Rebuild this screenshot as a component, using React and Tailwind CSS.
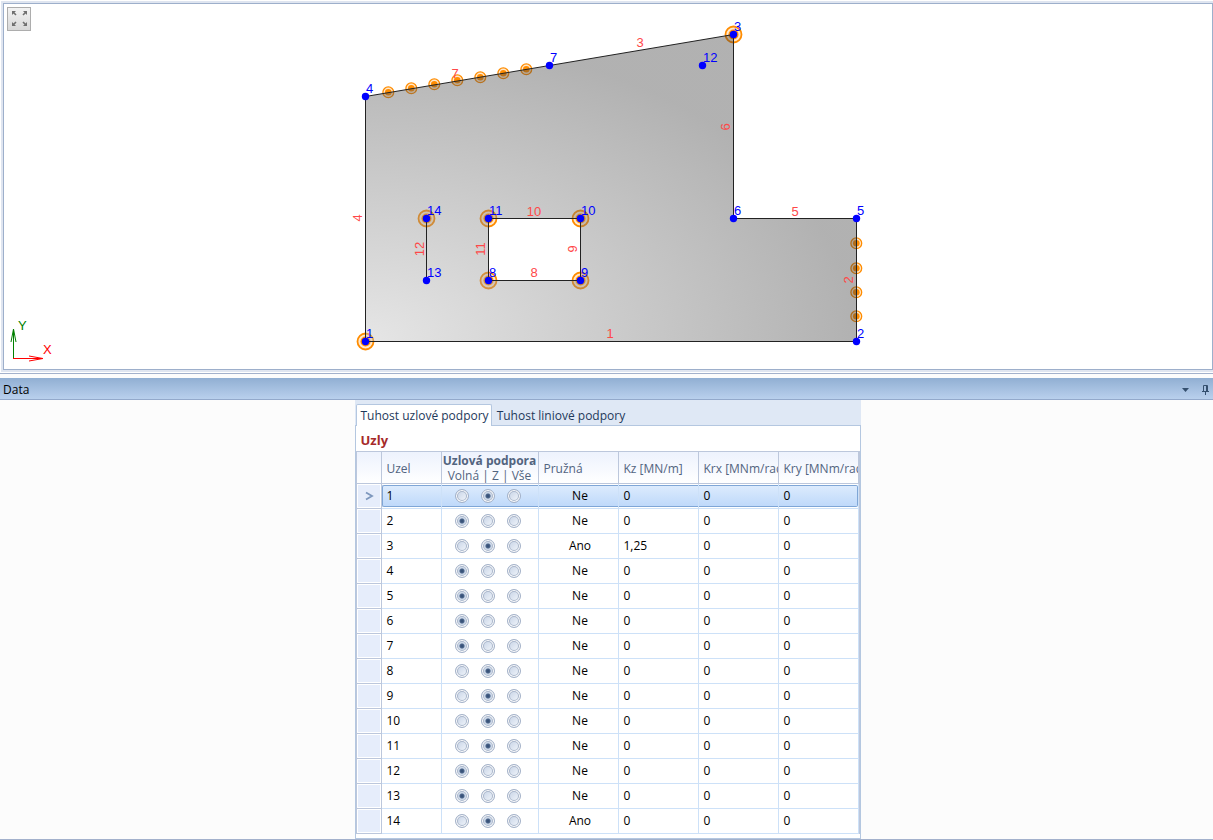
import React, { useState } from 'react';

const nodes = [
  { id: 1, x: 365, y: 341, support: true },
  { id: 2, x: 856, y: 341 },
  { id: 3, x: 733, y: 34, support: true },
  { id: 4, x: 365, y: 96 },
  { id: 5, x: 856, y: 218 },
  { id: 6, x: 733, y: 218 },
  { id: 7, x: 549, y: 65 },
  { id: 8, x: 488, y: 280, support: true },
  { id: 9, x: 580, y: 280, support: true },
  { id: 10, x: 580, y: 218, support: true },
  { id: 11, x: 488, y: 218, support: true },
  { id: 12, x: 702, y: 65 },
  { id: 13, x: 426, y: 280 },
  { id: 14, x: 426, y: 218, support: true }
];

const lineLabels = [
  { text: '1', x: 610, y: 338 },
  { text: '2', x: 853, y: 280, vertical: true },
  { text: '3', x: 640, y: 47 },
  { text: '4', x: 362, y: 218, vertical: true },
  { text: '5', x: 795, y: 216 },
  { text: '6', x: 730, y: 127, vertical: true },
  { text: '7', x: 455, y: 78 },
  { text: '8', x: 534, y: 277 },
  { text: '9', x: 577, y: 249, vertical: true },
  { text: '10', x: 534, y: 216 },
  { text: '11', x: 485, y: 249, vertical: true },
  { text: '12', x: 424, y: 249, vertical: true }
];

const lineSupports = [
  [388, 92], [411, 88], [434, 84], [457, 80], [480, 77], [503, 73], [526, 69],
  [856, 243], [856, 268], [856, 292], [856, 316]
];

const initialRows = [
  { id: 1, support: 'Z', spring: 'Ne', kz: '0' },
  { id: 2, support: 'Volná', spring: 'Ne', kz: '0' },
  { id: 3, support: 'Z', spring: 'Ano', kz: '1,25' },
  { id: 4, support: 'Volná', spring: 'Ne', kz: '0' },
  { id: 5, support: 'Volná', spring: 'Ne', kz: '0' },
  { id: 6, support: 'Volná', spring: 'Ne', kz: '0' },
  { id: 7, support: 'Volná', spring: 'Ne', kz: '0' },
  { id: 8, support: 'Z', spring: 'Ne', kz: '0' },
  { id: 9, support: 'Z', spring: 'Ne', kz: '0' },
  { id: 10, support: 'Z', spring: 'Ne', kz: '0' },
  { id: 11, support: 'Z', spring: 'Ne', kz: '0' },
  { id: 12, support: 'Volná', spring: 'Ne', kz: '0' },
  { id: 13, support: 'Volná', spring: 'Ne', kz: '0' },
  { id: 14, support: 'Z', spring: 'Ano', kz: '0' }
];

const supportTypes = ['Volná', 'Z', 'Vše'];

const PlateDrawing = () => (
  <svg
    viewBox="4 4 1208 365"
    className="block w-full h-[365px] font-['Liberation_Sans',Arial,sans-serif] text-[13px]"
  >
    <defs>
      <radialGradient
        id="plate"
        gradientUnits="userSpaceOnUse"
        cx="0"
        cy="0"
        r="1"
        gradientTransform="translate(365 341) scale(491 307)"
      >
        <stop offset="0" stopColor="#c0c0c0" stopOpacity="0.4" />
        <stop offset="1" stopColor="#3d3d3d" stopOpacity="0.4" />
      </radialGradient>
    </defs>

    {/* Supports lie under the transparent plate */}
    {nodes.filter(n => n.support).map(n => (
      <g key={n.id} transform={`translate(${n.x + 0.5} ${n.y + 0.5})`}>
        <circle r="8" fill="#ffe8cc" stroke="#ff8c00" strokeWidth="1.8" />
        <circle r="5" fill="#ff8c00" />
      </g>
    ))}
    {lineSupports.map(([x, y]) => (
      <g key={`${x}-${y}`} transform={`translate(${x + 0.3} ${y + 0.3})`}>
        <circle r="5.4" fill="#ffe8cc" stroke="#ff8c00" strokeWidth="1.3" />
        <circle r="3.3" fill="#ff8c00" />
      </g>
    ))}

    <path
      d="M365.5 341.5H856.5V218.5H733.5V34.5L365.5 96.5ZM488.5 218.5H580.5V280.5H488.5Z"
      fill="url(#plate)"
      fillRule="evenodd"
      stroke="#222"
    />
    <path d="M426.5 218.5V280.5" stroke="#222" />

    {lineLabels.map(l => (
      <text
        key={l.text}
        fill="#ff4848"
        textAnchor="middle"
        transform={l.vertical ? `translate(${l.x} ${l.y}) rotate(-90)` : `translate(${l.x} ${l.y})`}
      >
        {l.text}
      </text>
    ))}
    {nodes.map(n => (
      <g key={n.id} fill="#0000ff">
        <circle cx={n.x + 0.5} cy={n.y + 0.5} r="3.7" />
        <text x={n.x + 1} y={n.y - 3}>{n.id}</text>
      </g>
    ))}
  </svg>
);

const AxisCross = () => (
  <svg
    width="50"
    height="48"
    fill="none"
    className="absolute left-1 bottom-1 font-['Liberation_Sans',Arial,sans-serif] text-[13px]"
  >
    <path d="M5.5 42V12M3 25L5.5 12L8 25" stroke="#008000" />
    <path d="M5 41.5H35M21 39L35 41.5L21 44" stroke="#ff0000" />
    <text x="10" y="13" fill="#008000">Y</text>
    <text x="35" y="37" fill="#ff0000">X</text>
  </svg>
);

const HeaderCell = ({ children }) => (
  <th className="h-8 p-0 pt-0.5 font-normal text-left border-r border-b border-[#bcc7dc] bg-linear-to-b from-[#edf2fd] to-white">
    <div className="ml-[5px] overflow-hidden whitespace-nowrap">{children}</div>
  </th>
);

const Cell = ({ selected, edge, children }) => (
  <td className="h-[25px] p-0 border-r border-b border-[#cde1f8]">
    <div
      className={`${
        selected
          ? 'my-px h-[22px] leading-5 border-y border-[#7fa6d6] bg-linear-to-b from-[#dcebfd] to-[#bfd9fa]'
          : 'h-6 leading-6'
      } ${selected && edge === 'left' ? 'border-l rounded-l-xs' : ''} ${
        selected && edge === 'right' ? 'border-r rounded-r-xs' : ''
      }`}
    >
      {children}
    </div>
  </td>
);

const SupportRadios = ({ row, onChange }) => (
  <div className="flex h-full items-center justify-center gap-3 pr-1" role="radiogroup" aria-label={`Uzlová podpora ${row.id}`}>
    {supportTypes.map(type => (
      <input
        key={type}
        type="radio"
        name={`support-${row.id}`}
        aria-label={type}
        checked={row.support === type}
        onChange={() => onChange(row.id, type)}
        className="appearance-none size-3.5 rounded-full border border-[#a3b1c8] bg-linear-to-br from-[#c3d0e4] to-[#f6f9fd] shadow-[inset_0_0_0_1px_#fff,inset_0_0_0_2px_#a9b6cb] checked:bg-[radial-gradient(circle,#2f4a72_0,#4a6388_2px,#c5d2e4_3px,#e6edf6_5px)]"
      />
    ))}
  </div>
);

const App = () => {
  const [rows, setRows] = useState(initialRows);
  const [selectedId, setSelectedId] = useState(1);
  const [activeTab, setActiveTab] = useState(0);

  const tabs = ['Tuhost uzlové podpory', 'Tuhost liniové podpory'];

  const changeSupport = (id, support) => {
    setRows(rows.map(row => (row.id === id ? { ...row, support } : row)));
  };

  return (
    <div className="min-h-screen flex flex-col bg-[#fcfcfc] font-['Open_Sans','Noto_Sans',sans-serif] text-xs text-black">
      {/* Drawing */}
      <div className="pt-px pl-px border-b border-[#a3b1cc] bg-white">
        <div className="pt-0.5 pl-0.5 pb-0.5 mb-px bg-[#dfe5f0]">
          <div className="relative border border-[#9dafcb] bg-white">
            <PlateDrawing />
            <button
              type="button"
              aria-label="Přizpůsobit"
              className="absolute top-[3px] left-[3px] size-6 border border-[#adadad] bg-linear-to-b from-[#f3f3f3] to-[#d8d8d8]"
            >
              <svg viewBox="0 0 22 22" width="22" height="22" fill="#707070" stroke="#707070">
                <path stroke="none" d="M4 3h4l-4 4zM19 3h-4l4 4zM4 18h4l-4-4zM19 18h-4l4-4z" />
                <path strokeWidth="1.6" d="M5 4l3 3M18 4l-3 3M8 14l-3 3M15 14l3 3" />
              </svg>
            </button>
            <AxisCross />
          </div>
        </div>
      </div>

      {/* Panel title */}
      <div className="mt-1 h-[22px] flex items-center justify-between pt-0.5 pl-[3px] pr-1 border-b border-[#93a9cb] bg-linear-to-b from-[#91afd3] to-[#b9d0ed]">
        <h2>Data</h2>
        <div className="flex items-center gap-2.5">
          <button type="button" aria-label="Nabídka" className="w-3 h-4 flex items-center justify-center">
            <svg width="7" height="4" fill="#35506f">
              <path d="M0 0h7L3.5 4z" />
            </svg>
          </button>
          <button type="button" aria-label="Připnout" className="w-2 h-4 flex items-center justify-center">
            <svg width="7" height="10" fill="none" stroke="#35506f">
              <path d="M1.5 6V.5H5.5V6M4.5 1v5M0 6.5H7M3.5 7v3" />
            </svg>
          </button>
        </div>
      </div>

      {/* Data */}
      <div className="flex-1 flex justify-center pl-0.5 border-b border-[#a3b1cc]">
        <div className="w-[506px] flex flex-col bg-[#dfe8f5]">
          <div className="h-[26px] flex items-end pl-px border-b border-[#b4c7e0]" role="tablist">
            {tabs.map((tab, index) => (
              <button
                key={tab}
                type="button"
                role="tab"
                aria-selected={activeTab === index}
                onClick={() => setActiveTab(index)}
                className={`h-[22px] pl-1 pr-0.5 -mb-px whitespace-nowrap text-[#1e395b] border border-b-0 rounded-t-xs ${
                  activeTab === index ? 'bg-white border-[#b4c7e0]' : 'border-transparent'
                }`}
              >
                {tab}
              </button>
            ))}
          </div>

          <div className="flex-1 border-x border-b border-[#b4c7e0] bg-white">
            <h3 className="h-[25px] pl-[5px] leading-7 text-[13px] font-bold text-[#a52a2a]">Uzly</h3>
            <table className="w-full table-fixed border-separate border-spacing-0 border-t border-x border-[#bcc7dc]">
              <colgroup>
                <col className="w-[25px]" />
                <col className="w-[60px]" />
                <col className="w-[97px]" />
                <col />
                <col />
                <col />
                <col />
              </colgroup>
              <thead className="text-[#52647f]">
                <tr>
                  <HeaderCell />
                  <HeaderCell>Uzel</HeaderCell>
                  <th className="h-8 p-0 pt-px font-normal text-center leading-[15px] whitespace-nowrap border-r border-b border-[#bcc7dc] bg-linear-to-b from-[#edf2fd] to-white">
                    <div className="font-bold">Uzlová podpora</div>
                    <div>Volná | Z | Vše</div>
                  </th>
                  <HeaderCell>Pružná</HeaderCell>
                  <HeaderCell>Kz [MN/m]</HeaderCell>
                  <HeaderCell>Krx [MNm/rad]</HeaderCell>
                  <HeaderCell>Kry [MNm/rad]</HeaderCell>
                </tr>
              </thead>
              <tbody>
                {rows.map(row => {
                  const selected = row.id === selectedId;

                  return (
                    <tr key={row.id} onClick={() => setSelectedId(row.id)}>
                      <td className="h-[25px] p-0 border-r border-b border-[#bcc7dc] bg-[#e6edfb] shadow-[inset_0_0_0_1px_#fff]">
                        {selected && (
                          <svg width="24" height="24" fill="none" stroke="#7d97bd" strokeWidth="1.8" className="block">
                            <path d="M9 8.5l6 3.5l-6 3.5" />
                          </svg>
                        )}
                      </td>
                      <Cell selected={selected} edge="left">
                        <div className={selected ? 'pl-1' : 'pl-[5px]'}>{row.id}</div>
                      </Cell>
                      <Cell selected={selected}>
                        <SupportRadios row={row} onChange={changeSupport} />
                      </Cell>
                      <Cell selected={selected}>
                        <div className="pl-1 text-center">{row.spring}</div>
                      </Cell>
                      <Cell selected={selected}>
                        <div className="pl-[5px]">{row.kz}</div>
                      </Cell>
                      <Cell selected={selected}>
                        <div className="pl-[5px]">0</div>
                      </Cell>
                      <Cell selected={selected} edge="right">
                        <div className="pl-[5px]">0</div>
                      </Cell>
                    </tr>
                  );
                })}
              </tbody>
            </table>
          </div>
        </div>
      </div>
    </div>
  );
};

export default App;
